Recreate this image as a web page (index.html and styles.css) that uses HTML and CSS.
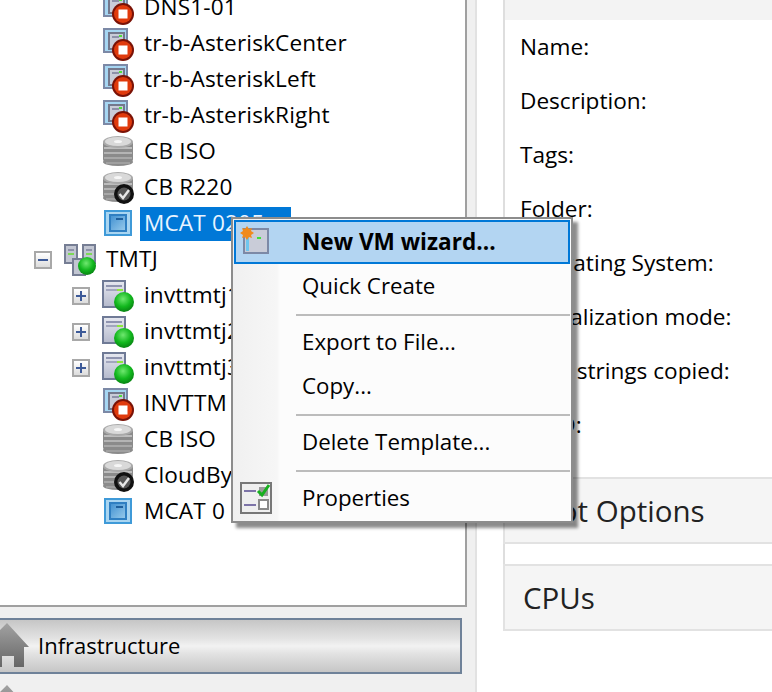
FILE: index.html
```html
<!DOCTYPE html>
<html lang="en">
<head>
    <meta charset="UTF-8">
    <title>XenCenter</title>
    <link rel="stylesheet" href="styles.css">
</head>
<body>
    <svg class="defs" width="0" height="0">
        <defs>
            <radialGradient id="green" cx=".45" cy=".35" r=".7">
                <stop offset="0" stop-color="#6fe86f"/>
                <stop offset=".55" stop-color="#12b81e"/>
                <stop offset="1" stop-color="#067a10"/>
            </radialGradient>
            <linearGradient id="hostFill" x1="0" y1="0" x2="0" y2="1">
                <stop offset="0" stop-color="#e6e8f0"/>
                <stop offset="1" stop-color="#b4b9cc"/>
            </linearGradient>
            <linearGradient id="blueFill" x1="0" y1="0" x2="1" y2="1">
                <stop offset="0" stop-color="#3f8fd0"/>
                <stop offset="1" stop-color="#9accec"/>
            </linearGradient>
            <linearGradient id="houseFill" x1="0" y1="0" x2="0" y2="1">
                <stop offset="0" stop-color="#a2a2a2"/>
                <stop offset="1" stop-color="#666"/>
            </linearGradient>
            <g id="stopBadge">
                <circle cx="21" cy="23" r="11" fill="#7a1206"/>
                <circle cx="21" cy="23" r="9" fill="#e03a0c"/>
                <rect x="16.5" y="18.5" width="9" height="9" fill="#fff"/>
            </g>
            <g id="vmOff">
                <rect x="2" y="2" width="23" height="23" fill="#fff" stroke="#7c89a6" stroke-width="2"/>
                <rect x="3" y="3" width="21" height="21" fill="#a6d6f2"/>
                <rect x="7" y="6" width="15" height="16" fill="#c9ccd8" stroke="#74788c" stroke-width="2"/>
                <rect x="10" y="9" width="7" height="2" fill="#8d90a8"/>
                <rect x="17" y="8" width="3" height="2" fill="#4fe03a"/>
                <use href="#stopBadge"/>
            </g>
            <g id="disks">
                <rect x="1" y="6" width="30" height="21" rx="3" fill="#8b8b8b"/>
                <ellipse cx="16" cy="27" rx="15" ry="4" fill="#8b8b8b"/>
                <rect x="2" y="12" width="28" height="2" fill="#bdbdbd"/>
                <rect x="2" y="17" width="28" height="2" fill="#b4b4b4"/>
                <rect x="2" y="22" width="28" height="2" fill="#a8a8a8"/>
                <rect x="4" y="27" width="24" height="2" fill="#a0a0a0"/>
                <ellipse cx="16" cy="7" rx="15" ry="6" fill="#a9a9a9"/>
                <ellipse cx="16" cy="6.5" rx="13" ry="4.5" fill="#d9d9d9"/>
                <ellipse cx="16" cy="6.5" rx="4" ry="1.6" fill="#f6f6f6"/>
            </g>
            <symbol id="iconVm" viewBox="0 0 34 34">
                <use href="#vmOff"/>
            </symbol>
            <symbol id="iconDisk" viewBox="0 0 34 34">
                <use href="#disks"/>
            </symbol>
            <symbol id="iconDiskOk" viewBox="0 0 34 34">
                <use href="#disks"/>
                <circle cx="22" cy="23" r="10" fill="#111"/>
                <circle cx="22" cy="23" r="6.5" fill="#555"/>
                <path d="M17.5 23l3.5 4 6-8" fill="none" stroke="#e8e8e8" stroke-width="2.4"/>
            </symbol>
            <symbol id="iconTemplate" viewBox="0 0 34 34">
                <rect x="3" y="4" width="26" height="24" fill="#a9d5f1" stroke="#3f9ad8" stroke-width="2"/>
                <rect x="8" y="8" width="16" height="16" fill="url(#blueFill)" stroke="#2f7fc2" stroke-width="2"/>
                <rect x="14" y="11" width="7" height="2" fill="#1e5f9c"/>
            </symbol>
            <symbol id="iconHost" viewBox="0 0 34 34">
                <rect x="1" y="2" width="22" height="26" fill="url(#hostFill)" stroke="#6f7a96" stroke-width="2"/>
                <rect x="4" y="6" width="16" height="2" fill="#8f94b0"/>
                <rect x="4" y="10" width="11" height="2" fill="#a2a6be"/>
                <rect x="15" y="10" width="6" height="2" fill="#8fe83c"/>
                <circle cx="22" cy="23" r="10" fill="url(#green)"/>
            </symbol>
            <symbol id="iconPool" viewBox="0 0 34 34">
                <g fill="#c2c6d2" stroke="#767e94" stroke-width="2">
                    <rect x="1" y="2" width="12" height="18"/>
                    <rect x="19" y="2" width="12" height="18"/>
                    <rect x="9" y="16" width="12" height="16"/>
                </g>
                <rect x="4" y="6" width="6" height="2" fill="#8e93a8"/>
                <rect x="22" y="6" width="6" height="2" fill="#8e93a8"/>
                <rect x="4" y="10" width="6" height="2" fill="#7ed957"/>
                <rect x="22" y="10" width="6" height="2" fill="#7ed957"/>
                <circle cx="23" cy="23" r="9" fill="url(#green)"/>
            </symbol>
            <symbol id="iconHouse" viewBox="0 0 30 46">
                <path d="M7 0l22 24h-5v20H14V33H2v11H0V7z" fill="url(#houseFill)"/>
            </symbol>
        </defs>
    </svg>

    <div class="screen">
        <div class="leftCol">
            <ul class="tree">
                <li class="row"><svg class="icon"><use href="#iconVm"/></svg><span class="label">DNS1-01</span></li>
                <li class="row"><svg class="icon"><use href="#iconVm"/></svg><span class="label">tr-b-AsteriskCenter</span></li>
                <li class="row"><svg class="icon"><use href="#iconVm"/></svg><span class="label">tr-b-AsteriskLeft</span></li>
                <li class="row"><svg class="icon"><use href="#iconVm"/></svg><span class="label">tr-b-AsteriskRight</span></li>
                <li class="row"><svg class="icon"><use href="#iconDisk"/></svg><span class="label">CB ISO</span></li>
                <li class="row"><svg class="icon"><use href="#iconDiskOk"/></svg><span class="label">CB R220</span></li>
                <li class="row"><svg class="icon"><use href="#iconTemplate"/></svg><span class="label selected">MCAT 0205</span></li>
                <li class="row pool"><span class="toggle minus"></span><svg class="icon"><use href="#iconPool"/></svg><span class="label">TMTJ</span></li>
                <li class="row host"><span class="toggle plus"></span><svg class="icon"><use href="#iconHost"/></svg><span class="label">invttmtj1</span></li>
                <li class="row host"><span class="toggle plus"></span><svg class="icon"><use href="#iconHost"/></svg><span class="label">invttmtj2</span></li>
                <li class="row host"><span class="toggle plus"></span><svg class="icon"><use href="#iconHost"/></svg><span class="label">invttmtj3</span></li>
                <li class="row"><svg class="icon"><use href="#iconVm"/></svg><span class="label">INVTTM</span></li>
                <li class="row"><svg class="icon"><use href="#iconDisk"/></svg><span class="label">CB ISO</span></li>
                <li class="row"><svg class="icon"><use href="#iconDiskOk"/></svg><span class="label">CloudBy</span></li>
                <li class="row"><svg class="icon"><use href="#iconTemplate"/></svg><span class="label">MCAT 0</span></li>
            </ul>
            <div class="navBar">
                <svg class="house"><use href="#iconHouse"/></svg>
                <span class="navText">Infrastructure</span>
            </div>
            <div class="navNext">
                <svg class="house"><use href="#iconHouse"/></svg>
            </div>
        </div>

        <div class="rightCol">
            <div class="panel">
                <div class="panelHead"></div>
                <ul class="fields">
                    <li>Name:</li>
                    <li>Description:</li>
                    <li>Tags:</li>
                    <li>Folder:</li>
                    <li>Operating System:</li>
                    <li>Virtualization mode:</li>
                    <li>BIOS strings copied:</li>
                    <li>UUID:</li>
                </ul>
                <div class="section">Boot Options</div>
                <div class="section">CPUs</div>
            </div>
        </div>
    </div>

    <div class="menu">
        <div class="menuItem active">
            <span class="menuIcon">
                <svg width="32" height="32" viewBox="0 0 32 32">
                    <rect x="4" y="3" width="24" height="24" fill="#c9ccd8" stroke="#7c89a6" stroke-width="2"/>
                    <rect x="6" y="5" width="3" height="20" fill="#6fc6ee"/>
                    <rect x="17" y="11" width="4" height="2" fill="#3fe03a"/>
                    <path d="M7 0l2 3 3-1-1 3 3 2-3 2 1 3-3-1-2 3-2-3-3 1 1-3-3-2 3-2-1-3 3 1z" fill="#f08a1c"/>
                </svg>
            </span>
            <span class="menuText">New VM wizard...</span>
        </div>
        <div class="menuItem"><span class="menuIcon"></span><span class="menuText">Quick Create</span></div>
        <div class="menuSep"></div>
        <div class="menuItem"><span class="menuIcon"></span><span class="menuText">Export to File...</span></div>
        <div class="menuItem"><span class="menuIcon"></span><span class="menuText">Copy...</span></div>
        <div class="menuSep"></div>
        <div class="menuItem"><span class="menuIcon"></span><span class="menuText">Delete Template...</span></div>
        <div class="menuSep"></div>
        <div class="menuItem">
            <span class="menuIcon">
                <svg width="32" height="32" viewBox="0 0 32 32">
                    <rect x="1" y="1" width="30" height="30" fill="#efefef" stroke="#777" stroke-width="2"/>
                    <rect x="4" y="8" width="12" height="2" fill="#7d74a8"/>
                    <rect x="4" y="22" width="12" height="2" fill="#7d74a8"/>
                    <rect x="19" y="5" width="9" height="9" fill="#9a9a9a"/>
                    <rect x="19" y="18" width="9" height="9" fill="#fff" stroke="#8a8a8a" stroke-width="2"/>
                    <path d="M18 9l4 4 7-10" fill="none" stroke="#16b01e" stroke-width="3"/>
                </svg>
            </span>
            <span class="menuText">Properties</span>
        </div>
    </div>
</body>
</html>
```

FILE: styles.css
```css
* {
    box-sizing: border-box;
}

html, body {
    margin: 0;
    height: 100%;
    overflow: hidden;
}

body {
    font-family: "Open Sans", "Noto Sans", "Liberation Sans", sans-serif;
    font-size: 22.6px;
    color: #000;
    background: #fff;
}

.defs {
    position: absolute;
}

.screen {
    display: flex;
    height: 692px;
    overflow: hidden;
}

.leftCol {
    width: 475px;
    flex: none;
    background: #f0f0f0;
    overflow: hidden;
}

.tree {
    list-style: none;
    margin: 0;
    padding: 0 0 0 102px;
    width: 466.5px;
    height: 607px;
    background: #fff;
    border-right: 2px solid #a0a0a0;
    border-bottom: 2px solid #a0a0a0;
    overflow: hidden;
}

.row {
    display: flex;
    align-items: center;
    height: 36px;
    gap: 10px;
    white-space: nowrap;
}

.row:first-child {
    margin-top: -10px;
}

.row.pool {
    margin-left: -68px;
    gap: 12px;
}

.row.host {
    margin-left: -30px;
    gap: 12px;
}

.row.pool .label,
.row.host .label {
    margin-left: -2px;
}

.icon {
    width: 34px;
    height: 34px;
    flex: none;
    margin-right: -2px;
}

.label {
    line-height: 32px;
    padding-bottom: 2px;
    letter-spacing: .16px;
}

.label.selected {
    width: 151px;
    margin-left: -4px;
    padding-left: 4px;
    background: #0078d7;
    color: #e8f4ff;
}

.toggle {
    width: 18px;
    height: 18px;
    flex: none;
    border: 2px solid #a8a8a8;
    background: linear-gradient(#fff, #dcdcdc);
    display: flex;
    align-items: center;
    justify-content: center;
    position: relative;
}

.toggle::before {
    content: "";
    width: 10px;
    height: 2px;
    background: #3d5a98;
}

.toggle.plus::after {
    content: "";
    position: absolute;
    width: 2px;
    height: 10px;
    background: #3d5a98;
}

.navBar {
    display: flex;
    align-items: center;
    gap: 8px;
    width: 462px;
    height: 56px;
    margin-top: 11px;
    border: 2px solid #6f8299;
    border-left: 0;
    background: linear-gradient(#c6c6c6, #e2e2e2 35%, #f2f2f2 50%, #e2e2e2 65%, #c6c6c6);
}

.navText {
    padding-bottom: 2px;
    font-size: 22px;
}

.house {
    width: 30px;
    height: 46px;
    flex: none;
}

.navNext {
    margin-top: 11px;
    height: 20px;
}

.rightCol {
    flex: 1;
    min-width: 0;
    border-left: 2px solid #e2e2e2;
    padding-left: 26px;
    background: #fff;
}

.panel {
    border-left: 2px solid #dedede;
    margin-right: -20px;
}

.panelHead {
    height: 20px;
    background: #f3f3f3;
}

.fields {
    list-style: none;
    margin: 1px 0 24px;
    padding: 0 0 0 15px;
}

.fields li {
    height: 54px;
    line-height: 52px;
    white-space: nowrap;
}

.section {
    height: 67px;
    margin: 0 0 20px -2px;
    padding-left: 18px;
    line-height: 64px;
    font-size: 29.5px;
    color: #222;
    background: #f5f5f5;
    border: 2px solid #e2e2e2;
}

.menu {
    position: absolute;
    left: 231px;
    top: 217px;
    width: 342px;
    height: 306px;
    padding: 1px;
    border: 2px solid #8c8c8c;
    background: linear-gradient(90deg, #f0f0f0, #f6f6f6 44px, #fcfcfc 47px);
    box-shadow: 5px 5px 3px rgba(0, 0, 0, .45);
}

.menuItem {
    display: flex;
    align-items: center;
    height: 44px;
    white-space: nowrap;
    font-size: 22.3px;
}

.menuText {
    padding-bottom: 2px;
}

.menuItem.active {
    background: #b3d5f2;
    border: 2px solid #0078d7;
    font-size: 22.6px;
    font-weight: 700;
}

.menuIcon {
    width: 68px;
    flex: none;
    display: flex;
    padding-left: 6px;
}

.menuItem.active .menuIcon {
    width: 66px;
    padding-left: 4px;
}

.menuSep {
    height: 2px;
    margin: 6px 0 4px 62px;
    background: #bcbcbc;
}
```
